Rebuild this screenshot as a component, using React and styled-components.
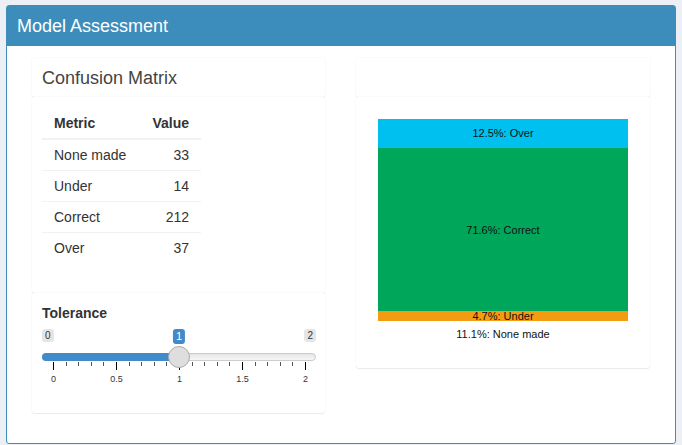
import React from 'react';
import styled, { createGlobalStyle } from 'styled-components';

const GlobalStyle = createGlobalStyle`
  html, body {
    margin: 0;
    padding: 0;
    background: #ecf0f5;
    font-family: 'Liberation Sans', Arial, sans-serif;
    color: #333;
  }
  * { box-sizing: border-box; }
`;

const Page = styled.div`
  padding: 5px 6px 0;
`;

const OuterBox = styled.div`
  height: 439px;
  background: #fff;
  border: 1px solid #3c8dbc;
  border-radius: 3px;
  display: flex;
  flex-direction: column;
`;

const OuterHeader = styled.div`
  background: #3c8dbc;
  color: #fff;
  padding: 11px 10px;
  font-size: 18px;
  line-height: 18px;
`;

const OuterBody = styled.div`
  padding: 12px 25px;
  display: grid;
  grid-template-columns: 293px 294px;
  column-gap: 31px;
  align-items: start;
`;

const Column = styled.div`
  display: flex;
  flex-direction: column;
`;

const Box = styled.div`
  background: #fff;
  border-radius: 3px;
  box-shadow: 0 0 0 1px rgba(0, 0, 0, 0.015), 0 1px 1px rgba(0, 0, 0, 0.07);
  padding: ${p => p.$pad || '10px'};
`;

const TitleBox = styled(Box)`
  height: 39px;
  display: flex;
  align-items: center;
  padding: 0 10px;
`;

const BoxTitle = styled.h3`
  margin: 0;
  font-size: 18px;
  line-height: 18px;
  font-weight: 400;
  color: #444;
`;

const Table = styled.table`
  width: 159px;
  border-collapse: collapse;
  margin: 1px 0 20px;
  font-size: 14px;
  line-height: 20px;
  color: #333;
`;

const Th = styled.th`
  padding: 5px 12px;
  text-align: ${p => (p.$right ? 'right' : 'left')};
  font-weight: 700;
  border-bottom: 2px solid #f1f1f1;
`;

const Td = styled.td`
  padding: 5px 12px;
  text-align: ${p => (p.$right ? 'right' : 'left')};
  border-top: 1px solid #f2f2f2;
`;

const FieldLabel = styled.div`
  font-size: 14px;
  font-weight: 700;
  line-height: 20px;
  margin-bottom: 5px;
  color: #333;
`;

const Slider = styled.div`
  position: relative;
  width: 274px;
  height: 60px;
  margin-bottom: 15px;
`;

const EdgeTag = styled.span`
  position: absolute;
  top: 1px;
  ${p => (p.$right ? 'right: 0;' : 'left: 0;')}
  font-size: 10px;
  line-height: 13px;
  padding: 0 3px;
  color: #333;
  background: rgba(0, 0, 0, 0.1);
  border-radius: 3px;
`;

const ValueTag = styled.span`
  position: absolute;
  top: 1px;
  left: ${p => p.$x}px;
  transform: translateX(-50%);
  font-size: 11px;
  line-height: 15px;
  padding: 0 3px;
  color: #fff;
  background: #428bca;
  border-radius: 3px;
`;

const Track = styled.div`
  position: absolute;
  top: 25px;
  left: 0;
  right: 0;
  height: 8px;
  border: 1px solid #ccc;
  border-radius: 16px;
  background: linear-gradient(to bottom, #dedede -50%, #fff 150%);
`;

const Bar = styled.div`
  position: absolute;
  top: 25px;
  left: 0;
  height: 8px;
  background: #428bca;
  border-radius: 16px 0 0 16px;
`;

const Handle = styled.div`
  position: absolute;
  top: 18px;
  width: 22px;
  height: 22px;
  margin-left: -11px;
  border: 1px solid #ababab;
  background: #dedede;
  border-radius: 50%;
`;

const Tick = styled.div`
  position: absolute;
  top: 34px;
  width: 1px;
  height: ${p => (p.$major ? 8 : 4)}px;
  background: ${p => (p.$major ? '#000' : '#555')};
`;

const TickText = styled.span`
  position: absolute;
  top: 45px;
  transform: translateX(-50%);
  font-size: 9px;
  line-height: 12px;
  color: #333;
`;

const rows = [
  ['None made', 33],
  ['Under', 14],
  ['Correct', 212],
  ['Over', 37],
];

const ToleranceSlider = ({ value, min, max }) => {
  const gridStart = 11;
  const gridWidth = 252;
  const pos = v => gridStart + ((v - min) / (max - min)) * gridWidth;
  const ticks = [];
  for (let i = 0; i <= 20; i++) {
    const x = gridStart + (gridWidth * i) / 20;
    ticks.push(<Tick key={i} $major={i % 5 === 0} style={{ left: Math.round(x) }} />);
  }
  const labels = [0, 0.5, 1, 1.5, 2];
  return (
    <Slider>
      <EdgeTag>{min}</EdgeTag>
      <EdgeTag $right>{max}</EdgeTag>
      <ValueTag $x={pos(value)}>{value}</ValueTag>
      <Track />
      <Bar style={{ width: pos(value) }} />
      {ticks}
      {labels.map(l => (
        <TickText key={l} style={{ left: pos(l) + 0.5 }}>{l}</TickText>
      ))}
      <Handle style={{ left: pos(value) }} />
    </Slider>
  );
};

const segments = [
  { label: '12.5%: Over', y: 11, h: 29, color: '#00c0ef', ty: 25 },
  { label: '71.6%: Correct', y: 40, h: 163, color: '#00a65a', ty: 122 },
  { label: '4.7%: Under', y: 203, h: 10, color: '#f39c12', ty: 208 },
  { label: '11.1%: None made', y: 213, h: 0, color: 'none', ty: 226 },
];

const StackChart = () => (
  <svg width="274" height="250" style={{ display: 'block' }}>
    {segments.map(s => (
      <g key={s.label}>
        {s.h > 0 && <rect x="12" y={s.y} width="250" height={s.h} fill={s.color} />}
        <text
          x="137"
          y={s.ty}
          textAnchor="middle"
          dominantBaseline="central"
          fontSize="11"
          fontFamily="'Liberation Sans', Arial, sans-serif"
          fill="#111"
        >
          {s.label}
        </text>
      </g>
    ))}
  </svg>
);

export default function App() {
  return (
    <Page>
      <GlobalStyle />
      <OuterBox>
        <OuterHeader>Model Assessment</OuterHeader>
        <OuterBody>
          <Column>
            <TitleBox>
              <BoxTitle>Confusion Matrix</BoxTitle>
            </TitleBox>
            <Box>
              <Table>
                <thead>
                  <tr>
                    <Th>Metric</Th>
                    <Th $right>Value</Th>
                  </tr>
                </thead>
                <tbody>
                  {rows.map(([k, v]) => (
                    <tr key={k}>
                      <Td>{k}</Td>
                      <Td $right>{v}</Td>
                    </tr>
                  ))}
                </tbody>
              </Table>
            </Box>
            <Box>
              <FieldLabel>Tolerance</FieldLabel>
              <ToleranceSlider value={1} min={0} max={2} />
            </Box>
          </Column>
          <Column>
            <TitleBox />
            <Box $pad="11px 10px 10px">
              <StackChart />
            </Box>
          </Column>
        </OuterBody>
      </OuterBox>
    </Page>
  );
}
